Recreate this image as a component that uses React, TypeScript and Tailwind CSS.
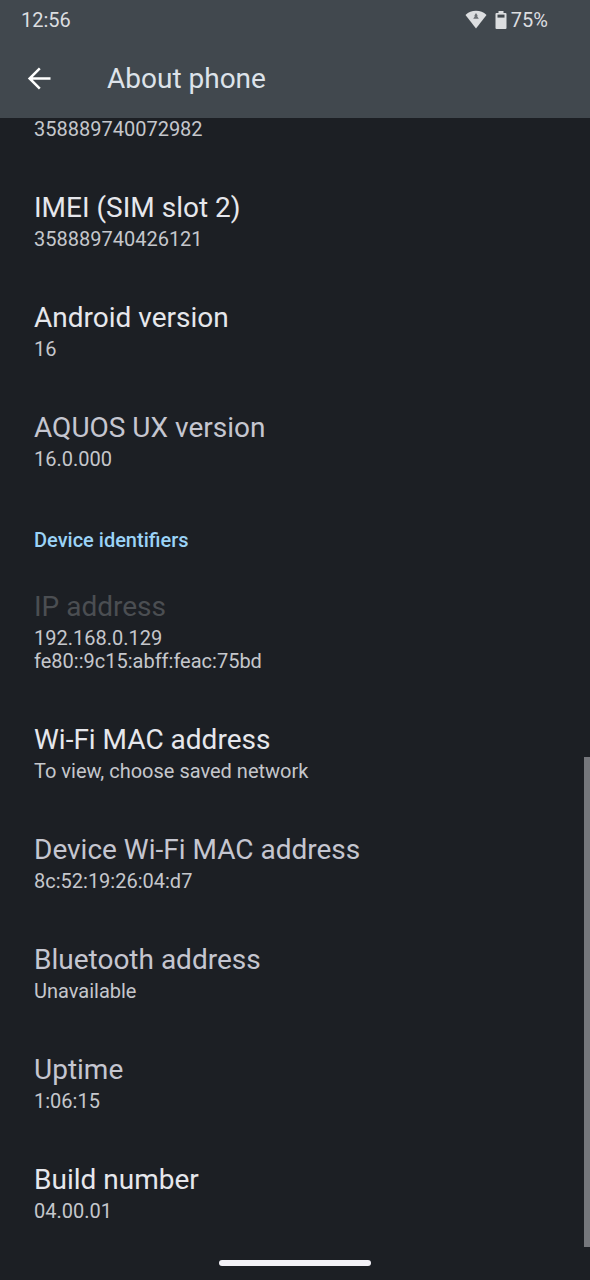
type Tone = "bright" | "normal" | "disabled";

type Preference = {
    title: string;
    summary: string[];
    tone: Tone;
};

const versions: Preference[] = [
    { title: "IMEI (SIM slot 2)", summary: ["358889740426121"], tone: "bright" },
    { title: "Android version", summary: ["16"], tone: "bright" },
    { title: "AQUOS UX version", summary: ["16.0.000"], tone: "normal" },
];

const identifiers: Preference[] = [
    { title: "IP address", summary: ["192.168.0.129", "fe80::9c15:abff:feac:75bd"], tone: "disabled" },
    { title: "Wi-Fi MAC address", summary: ["To view, choose saved network"], tone: "bright" },
    { title: "Device Wi-Fi MAC address", summary: ["8c:52:19:26:04:d7"], tone: "normal" },
    { title: "Bluetooth address", summary: ["Unavailable"], tone: "normal" },
    { title: "Uptime", summary: ["1:06:15"], tone: "normal" },
    { title: "Build number", summary: ["04.00.01"], tone: "bright" },
];

const toneClass: Record<Tone, string> = {
    bright: "text-[#e6e7ec]",
    normal: "text-[#c5c6d0]",
    disabled: "text-[#4b4e52]",
};

const WifiIcon = () => (
    <svg width="22" height="20" viewBox="0 0 22 20" aria-hidden="true">
        <path d="M11 18.6 L0.5 5 C3.4 2.2 7 0.8 11 0.8 C15 0.8 18.6 2.2 21.5 5 Z" fill="#dcdee0" />
        <path d="M11 3 L12.6 5.4 L12.2 6.2 L13.8 8.8 H8.2 L9.8 6.2 L9.4 5.4 Z" fill="#6d7276" />
    </svg>
);

const BatteryIcon = () => (
    <svg width="12" height="20" viewBox="0 0 12 20" aria-hidden="true">
        <path
            d="M3.5 1 H8.5 V3 H10.5 Q11.5 3 11.5 4 V18 Q11.5 19 10.5 19 H1.5 Q0.5 19 0.5 18 V4 Q0.5 3 1.5 3 H3.5 Z"
            fill="#dcdee0"
        />
        <rect x="2.5" y="4.6" width="7" height="3" fill="#41484d" />
    </svg>
);

const BackIcon = () => (
    <svg width="24" height="24" viewBox="0 0 24 24" fill="none" stroke="#ffffff" strokeWidth="2.5" aria-hidden="true">
        <path d="M23.5 11.5 H2.8 M12.8 1.3 L2.6 11.5 L12.8 21.7" />
    </svg>
);

const PreferenceItem = ({ title, summary, tone }: Preference) => (
    <li className="px-[34px] pt-[23px] pb-6">
        <h3 className={`text-[28px] leading-10 ${toneClass[tone]}`}>{title}</h3>
        {summary.map((line) => (
            <p key={line} className="text-xl leading-[23px] text-[#c5c7cc]">{line}</p>
        ))}
    </li>
);

export default function App() {
    return (
        <div className="flex min-h-screen flex-col bg-[#1c1f24] font-[Roboto,sans-serif]">
            <header className="bg-[#41484e]">
                <div className="flex h-10 items-center justify-between pr-[42px] pl-[21px] text-xl text-[#dcdee0]">
                    <time>12:56</time>
                    <div className="flex items-center">
                        <WifiIcon />
                        <span className="ml-2"><BatteryIcon /></span>
                        <span className="ml-1">75%</span>
                    </div>
                </div>
                <div className="flex h-[78px] items-center pl-[27px]">
                    <button type="button" aria-label="Back">
                        <BackIcon />
                    </button>
                    <h1 className="ml-14 text-[28px] leading-10 text-[#dde3ea]">About phone</h1>
                </div>
            </header>

            <main className="relative">
                <p className="px-[34px] pb-6 text-xl leading-[23px] text-[#c5c7cc]">358889740072982</p>
                <ul>
                    {versions.map((item) => (
                        <PreferenceItem key={item.title} {...item} />
                    ))}
                </ul>
                <h2 className="px-[34px] pt-[34px] pb-3 text-xl leading-[23px] font-medium text-[#9bd3f7]">
                    Device identifiers
                </h2>
                <ul>
                    {identifiers.map((item) => (
                        <PreferenceItem key={item.title} {...item} />
                    ))}
                </ul>
                {/* scroll thumb */}
                <div className="absolute right-0 bottom-0 h-[43.4%] w-[6px] bg-[#75777c]" />
            </main>

            <footer className="flex h-8 items-center justify-center">
                <div className="h-[6px] w-[152px] rounded-full bg-[#f3f2f7]" />
            </footer>
        </div>
    );
}
